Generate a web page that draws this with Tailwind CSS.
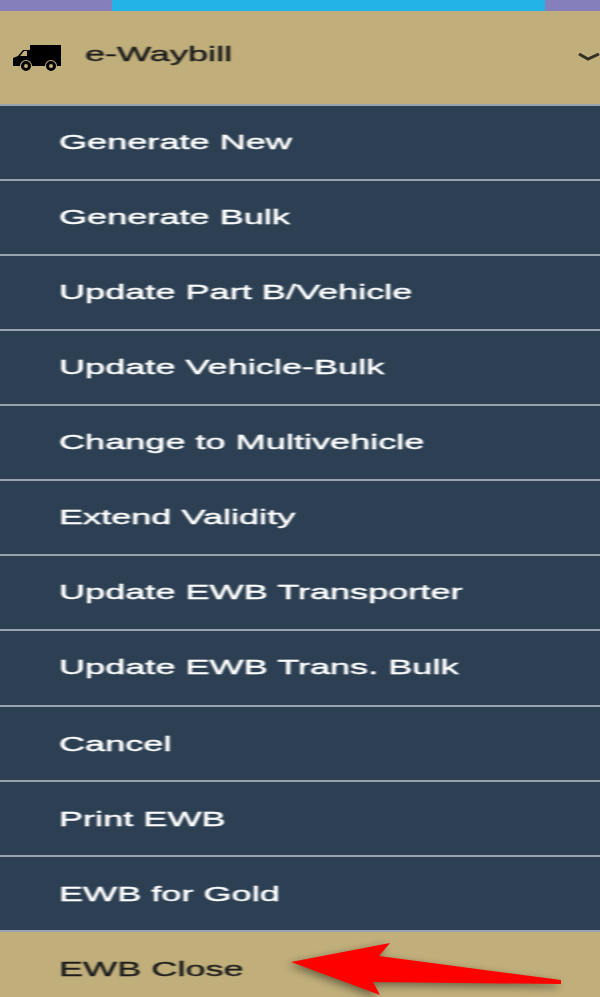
<!DOCTYPE html>
<html lang="en">
<head>
    <meta charset="UTF-8">
    <meta name="viewport" content="width=device-width, initial-scale=1.0">
    <title>e-Waybill menu</title>
    <script src="https://cdn.jsdelivr.net/npm/@tailwindcss/browser@4"></script>
</head>
<body class="bg-[#2d4053] font-['Liberation_Sans',Arial,sans-serif] overflow-hidden">
    <div class="relative w-[600px] h-[997px] overflow-hidden">
        <!-- top strip -->
        <div class="flex h-[11px]">
            <div class="w-[112px] bg-[#8580bb]"></div>
            <div class="w-[433px] bg-[#22b4e6]"></div>
            <div class="flex-1 bg-[#8580bb]"></div>
        </div>

        <!-- header -->
        <div class="flex items-center h-[93px] pb-[8px] bg-[#c1af7b] text-[#1e1e1e]">
            <svg class="ml-[13px] mt-[8px] w-[48px] h-[26px] shrink-0 blur-[0.5px]" viewBox="0 0 48 26">
                <path fill="#000" d="M17 0h31v21h-4a6 6 0 0 0-12 0H19a6 6 0 0 0-12 0H0v-8l5-2 5-6h7z"/>
                <path fill="#c1af7b" d="M7 11l4-5h3v5z"/>
                <circle cx="13" cy="21" r="3.500" fill="#c1af7b" stroke="#000" stroke-width="3"/>
                <circle cx="38" cy="21" r="3.500" fill="#c1af7b" stroke="#000" stroke-width="3"/>
            </svg>
            <span class="ml-[24px] text-[21px] blur-[0.6px] origin-left scale-x-[1.72] [-webkit-text-stroke:0.4px_currentColor]">e-Waybill</span>
            <svg class="ml-auto mt-[6px] w-[22px] h-[8px] blur-[0.4px]" viewBox="0 0 22 8">
                <path d="M1 1l9 5 11-5" fill="none" stroke="#33302a" stroke-width="3"/>
            </svg>
        </div>

        <!-- menu items -->
        <ul class="text-[21px] text-white">
            <li class="flex items-center h-[75px] pb-[2px] pl-[59px] border-t-2 border-[#97a3ae]"><span class="blur-[0.6px] origin-left scale-x-[1.72] [-webkit-text-stroke:0.4px_currentColor]">Generate New</span></li>
            <li class="flex items-center h-[75px] pb-[2px] pl-[59px] border-t-2 border-[#97a3ae]"><span class="blur-[0.6px] origin-left scale-x-[1.72] [-webkit-text-stroke:0.4px_currentColor]">Generate Bulk</span></li>
            <li class="flex items-center h-[75px] pb-[2px] pl-[59px] border-t-2 border-[#97a3ae]"><span class="blur-[0.6px] origin-left scale-x-[1.72] [-webkit-text-stroke:0.4px_currentColor]">Update Part B/Vehicle</span></li>
            <li class="flex items-center h-[75px] pb-[2px] pl-[59px] border-t-2 border-[#97a3ae]"><span class="blur-[0.6px] origin-left scale-x-[1.72] [-webkit-text-stroke:0.4px_currentColor]">Update Vehicle-Bulk</span></li>
            <li class="flex items-center h-[75px] pb-[2px] pl-[59px] border-t-2 border-[#97a3ae]"><span class="blur-[0.6px] origin-left scale-x-[1.72] [-webkit-text-stroke:0.4px_currentColor]">Change to Multivehicle</span></li>
            <li class="flex items-center h-[75px] pb-[2px] pl-[59px] border-t-2 border-[#97a3ae]"><span class="blur-[0.6px] origin-left scale-x-[1.72] [-webkit-text-stroke:0.4px_currentColor]">Extend Validity</span></li>
            <li class="flex items-center h-[75px] pb-[2px] pl-[59px] border-t-2 border-[#97a3ae]"><span class="blur-[0.6px] origin-left scale-x-[1.72] [-webkit-text-stroke:0.4px_currentColor]">Update EWB Transporter</span></li>
            <li class="flex items-center h-[76px] pb-[2px] pl-[59px] border-t-2 border-[#97a3ae]"><span class="blur-[0.6px] origin-left scale-x-[1.72] [-webkit-text-stroke:0.4px_currentColor]">Update EWB Trans. Bulk</span></li>
            <li class="flex items-center h-[75px] pl-[59px] border-t-2 border-[#97a3ae]"><span class="blur-[0.6px] origin-left scale-x-[1.72] [-webkit-text-stroke:0.4px_currentColor]">Cancel</span></li>
            <li class="flex items-center h-[75px] pl-[59px] border-t-2 border-[#97a3ae]"><span class="blur-[0.6px] origin-left scale-x-[1.72] [-webkit-text-stroke:0.4px_currentColor]">Print EWB</span></li>
            <li class="flex items-center h-[75px] pl-[59px] border-t-2 border-[#97a3ae]"><span class="blur-[0.6px] origin-left scale-x-[1.72] [-webkit-text-stroke:0.4px_currentColor]">EWB for Gold</span></li>
            <li class="flex items-center h-[75px] pl-[59px] border-t-2 border-[#97a3ae] bg-[#c1af7b] text-[#1e1e1e]"><span class="blur-[0.6px] origin-left scale-x-[1.72] [-webkit-text-stroke:0.4px_currentColor]">EWB Close</span></li>
        </ul>

        <!-- red annotation arrow -->
        <svg class="absolute left-0 top-0 w-[600px] h-[997px] pointer-events-none drop-shadow-[-3px_3px_4px_rgba(0,0,0,0.45)]" viewBox="0 0 600 997">
            <path fill="#fe0000" d="M291 962L390 943L379 956L561 980L561 984L373 982L380 995Z"/>
        </svg>
    </div>
</body>
</html>
